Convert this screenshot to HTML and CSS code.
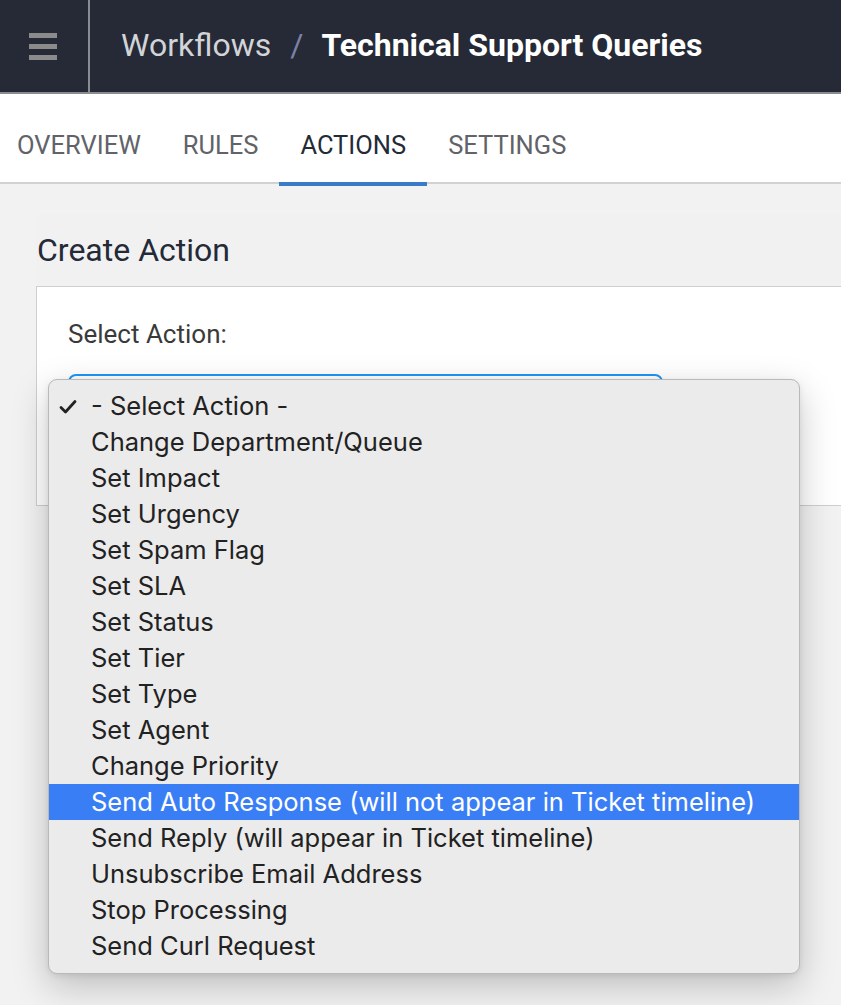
FILE: index.html
```html
<!DOCTYPE html>
<html lang="en">
<head>
<meta charset="utf-8">
<title>Technical Support Queries - Actions</title>
<link rel="stylesheet" href="styles.css">
</head>
<body>
<header class="topbar">
  <div class="menu-btn">
    <span class="bar"></span><span class="bar"></span><span class="bar"></span>
  </div>
  <div class="crumbs">
    <span class="crumb">Workflows</span>
    <span class="sep">/</span>
    <span class="crumb-current">Technical Support Queries</span>
  </div>
</header>
<nav class="tabs">
  <div class="tab-list">
    <span class="tab">OVERVIEW</span>
    <span class="tab">RULES</span>
    <span class="tab active">ACTIONS</span>
    <span class="tab">SETTINGS</span>
  </div>
</nav>
<main class="content">
  <section class="panel">
    <h2 class="panel-title">Create Action</h2>
    <div class="card">
      <label class="field-label">Select Action:</label>
      <div class="select-wrap">
        <div class="select-box"></div>
        <ul class="dropdown">
          <li class="opt selected"><svg class="check" viewBox="0 0 18 16" width="18" height="16"><polyline points="2,8.5 6.5,13 16,2.5" fill="none" stroke="#222" stroke-width="2.8" stroke-linecap="round" stroke-linejoin="round"/></svg>- Select Action -</li>
          <li class="opt">Change Department/Queue</li>
          <li class="opt">Set Impact</li>
          <li class="opt">Set Urgency</li>
          <li class="opt">Set Spam Flag</li>
          <li class="opt">Set SLA</li>
          <li class="opt">Set Status</li>
          <li class="opt">Set Tier</li>
          <li class="opt">Set Type</li>
          <li class="opt">Set Agent</li>
          <li class="opt">Change Priority</li>
          <li class="opt hover">Send Auto Response (will not appear in Ticket timeline)</li>
          <li class="opt">Send Reply (will appear in Ticket timeline)</li>
          <li class="opt">Unsubscribe Email Address</li>
          <li class="opt">Stop Processing</li>
          <li class="opt">Send Curl Request</li>
        </ul>
      </div>
    </div>
  </section>
</main>
</body>
</html>
```
FILE: styles.css
```css
html, body {
  margin: 0;
  padding: 0;
}
body {
  background: #f2f2f2;
  width: 841px;
  height: 1005px;
  overflow: hidden;
  font-family: Roboto, "Liberation Sans", sans-serif;
}
.topbar {
  display: flex;
  height: 92px;
  background: #252a36;
  border-bottom: 2px solid #8a8d90;
}
.menu-btn {
  width: 90px;
  border-right: 2px solid #8a8d90;
  display: flex;
  flex-direction: column;
  justify-content: center;
  align-items: flex-start;
  gap: 6px;
  padding-left: 29px;
  box-sizing: border-box;
}
.bar {
  display: block;
  width: 28px;
  height: 5px;
  background: #8b8b8b;
}
.crumbs {
  display: flex;
  align-items: center;
  padding-left: 31px;
  font-size: 32px;
  padding-bottom: 2px;
}
.crumb {
  color: #d2d4d8;
}
.sep {
  color: #7c82a6;
  margin: 0 18px 0 19px;
}
.crumb-current {
  color: #ffffff;
  font-weight: 700;
}
.tabs {
  background: #ffffff;
  height: 88px;
  border-bottom: 2px solid #d2d2d2;
}
.tab-list {
  display: flex;
  height: 100%;
  margin-left: -4px;
}
.tab {
  position: relative;
  display: flex;
  align-items: center;
  padding: 14px 21px 0;
  font-size: 25.5px;
  color: #616368;
}
.tab.active {
  color: #242a37;
}
.tab.active::after {
  content: "";
  position: absolute;
  left: 0;
  right: 0;
  bottom: -4px;
  height: 4px;
  background: #3a7bc8;
}
.content {
  padding: 30px 0 0 36px;
}
.panel {
  background: #f1f1f1;
}
.panel-title {
  margin: 0;
  padding: 16px 0 0 1px;
  height: 72px;
  box-sizing: border-box;
  font-family: Roboto, sans-serif;
  font-weight: 400;
  font-size: 32px;
  line-height: 40px;
  color: #242a37;
}
.card {
  background: #ffffff;
  border: 1px solid #cfcfcf;
  border-right: none;
  height: 220px;
  padding: 31px 0 0 31px;
  box-sizing: border-box;
}
.field-label {
  display: block;
  font-size: 26px;
  line-height: 32px;
  color: #3a3a3a;
}
.select-wrap {
  position: relative;
  margin-top: 24px;
  width: 595px;
}
.select-box {
  height: 44px;
  border: 2px solid #2196f3;
  border-radius: 8px;
  background: #ffffff;
  box-sizing: border-box;
}
.dropdown {
  position: absolute;
  left: -20px;
  top: 5px;
  width: 752px;
  margin: 0;
  padding: 8px 0 9px;
  list-style: none;
  background: #ebebeb;
  border: 1px solid #b9b9b9;
  border-radius: 9px;
  box-sizing: border-box;
  box-shadow: 0 12px 36px rgba(0, 0, 0, 0.22), 0 2px 6px rgba(0, 0, 0, 0.08);
  font-family: Inter, "Noto Sans", sans-serif;
}
.opt {
  position: relative;
  height: 36px;
  line-height: 36px;
  padding-left: 42px;
  font-size: 25.5px;
  color: #222222;
  white-space: nowrap;
}
.opt.hover {
  background: #3a7ef6;
  color: #ffffff;
}
.check {
  position: absolute;
  left: 10px;
  top: 11px;
}
```
